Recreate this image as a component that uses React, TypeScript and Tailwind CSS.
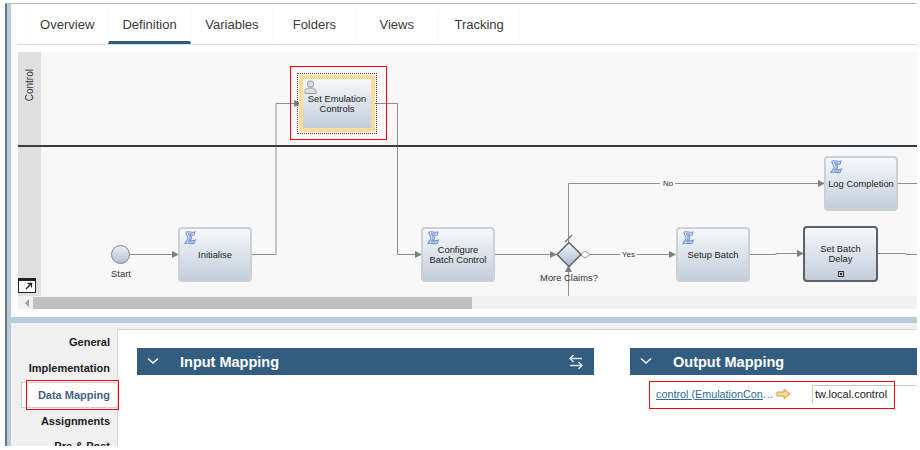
import React from "react";

function ServiceIcon() {
  return (
    <svg width="14" height="15" viewBox="0 0 14 15" fill="none" stroke="#7096d2" strokeWidth="1.1" className="absolute left-[3px] top-[1px]">
      <path d="M3 2C6 1 9 3 12 2L11 5C9 5.5 8 5 7 5C8 6.5 9.5 7 8.5 8.5C8 9.5 7.5 10 7 10.5C9 11 11 10.5 12.5 10L11 13.5C8 14 5 12.5 2 13.5C3 11 5.5 9.5 5 7.5C4.5 5.5 2.5 4.5 3 2Z" fill="#e6edf8" />
      <path d="M5 3.5C7 3.5 8 4 9.5 3.7M5.5 4C6.5 6 7.5 7 6.8 8.5C6.3 9.8 5.5 10.5 5 11.8C7 11.5 8.5 12.3 10.5 12" stroke="#5a80c0" strokeWidth="0.8" />
    </svg>
  );
}

function PersonIcon() {
  return (
    <svg width="13" height="14" viewBox="0 0 13 14" className="absolute left-[1px] top-[1px]" fill="#dedede" stroke="#9a9a9a" strokeWidth="1">
      <circle cx="6.5" cy="4" r="3.2" />
      <path d="M1 13.5V11.5C1 9.5 3 8.5 4.5 8H8.5C10 8.5 12 9.5 12 11.5V13.5Z" />
    </svg>
  );
}

function Node({ className, label, kind = "service" }: { className: string; label: string[]; kind?: "service" | "sub" }) {
  const isSub = kind === "sub";
  return (
    <div
      className={`absolute flex flex-col items-center justify-center rounded-[4px] bg-gradient-to-b from-[#f6f8fa] to-[#c3cedc] text-center text-[9.4px] leading-[10px] text-[#222] ${
        isSub ? "border-2 border-[#5c6166]" : "border-2 border-[#ccd1d6]"
      } ${className}`}
    >
      {!isSub && <ServiceIcon />}
      {label.map((l) => (
        <span key={l} className="whitespace-nowrap">{l}</span>
      ))}
      {isSub && (
        <span className="absolute bottom-[3px] left-1/2 flex h-[6px] w-[6px] -translate-x-1/2 items-center justify-center border border-[#333] bg-[#ccc]">
          <span className="h-[2px] w-[2px] bg-[#222]" />
        </span>
      )}
    </div>
  );
}

function Arrow({ x, y }: { x: number; y: number }) {
  return <path d={`M${x} ${y - 3.5}L${x + 7} ${y}L${x} ${y + 3.5}Z`} fill="#7f7f7f" stroke="none" />;
}

function Connectors() {
  return (
    <svg width="876" height="244" viewBox="41 52 876 244" className="absolute left-0 top-0" fill="none" stroke="#8e8e8e" strokeWidth="1">
      <path d="M130 254.5H172" />
      <Arrow x={172} y={254.5} />
      <path d="M252 254.5H276V103.5H294" />
      <Arrow x={294} y={103.5} />
      <path d="M374 103.5H397.5V254.5H415" />
      <Arrow x={415} y={254.5} />
      <path d="M495 254.5H550" />
      <Arrow x={550} y={254.5} />
      <path d="M590 254.5H620M637 254.5H670" />
      <Arrow x={669} y={254.5} />
      <path d="M580 254.5L585 251L590 254.5L585 258Z" fill="#fff" stroke="#999" />
      <path d="M750 254.5H776V253.5H797" />
      <Arrow x={797} y={253.5} />
      <path d="M878 253.5H906V254.5H917" />
      <path d="M568.5 242V183.5H660M675 183.5H818" />
      <Arrow x={818} y={183.5} />
      <path d="M898 183.5H917" />
      <path d="M565 242L572 235" stroke="#777" strokeWidth="1.5" />
      <path d="M568.5 268V296" />
      <path d="M565 272L568.5 265L572 272Z" fill="#7f7f7f" stroke="none" />
      <path d="M557 254.5L569 242.5L581 254.5L569 266.5Z" fill="url(#gw)" stroke="#5c636b" strokeWidth="1.5" />
      <circle cx="120.5" cy="254.5" r="9" fill="url(#st)" stroke="#7c8590" strokeWidth="1" />
      <defs>
        <linearGradient id="gw" x1="0" y1="0" x2="0" y2="1">
          <stop offset="0" stopColor="#f4f6fa" />
          <stop offset="1" stopColor="#a9bbd6" />
        </linearGradient>
        <linearGradient id="st" x1="0" y1="0" x2="0" y2="1">
          <stop offset="0" stopColor="#eef1f5" />
          <stop offset="1" stopColor="#b4c0d0" />
        </linearGradient>
      </defs>
    </svg>
  );
}

function Header({ title, className, swap }: { title: string; className: string; swap?: boolean }) {
  return (
    <div className={`flex h-[27px] items-center bg-[#325c80] text-white ${className}`}>
      <svg width="12" height="8" viewBox="0 0 12 8" fill="none" stroke="#fff" strokeWidth="1.5" className="ml-[10px] mt-[-2px]">
        <path d="M1 1.5L6 6L11 1.5" />
      </svg>
      <span className="ml-[21px] pt-[3px] text-[14.5px] font-bold">{title}</span>
      {swap && (
        <svg width="16" height="16" viewBox="0 0 16 16" fill="none" stroke="#dbe5ee" strokeWidth="1.4" className="ml-auto mr-[10px]">
          <path d="M14 4.5H2M5.5 1L2 4.5L5.5 8M2 11.5H14M10.5 8L14 11.5L10.5 15" />
        </svg>
      )}
    </div>
  );
}

export default function App() {
  const tabs = ["Overview", "Definition", "Variables", "Folders", "Views", "Tracking"];
  const nav = ["General", "Implementation", "Data Mapping", "Assignments", "Pre & Post"];
  return (
    <div className="h-[450px] w-[920px] overflow-hidden bg-white pl-[5px] pr-[3px] pt-[3px] font-['Liberation_Sans',Arial,sans-serif]">
      <div className="flex h-[443px] border-l-2 border-t border-l-[#6f757b] border-t-[#bdbdbd]">
        <div className="w-[4px] shrink-0 bg-[#b5cde0]" />
        <div className="flex min-w-0 flex-1 flex-col">
          <div className="h-[313px] shrink-0 bg-white">
            <div className="ml-[6px] flex h-[41px] border-b border-[#dcdcdc] pl-[9px]">
              {tabs.map((t) => (
                <div
                  key={t}
                  className={`flex h-[40px] w-[82.4px] items-center justify-center rounded-t-lg border-x border-b-[3px] border-t border-x-[#fbfbfb] border-t-[#fbfbfb] pt-[3px] text-[13px] text-[#3a3a3a] ${
                    t === "Definition" ? "border-b-[#2f5b80]" : "border-b-transparent"
                  }`}
                >
                  {t}
                </div>
              ))}
            </div>
            <div className="ml-[7px] mt-[7px]">
              <div className="relative flex h-[244px]">
                <div className="relative w-[23px] shrink-0 bg-[#e0e0e0]">
                  <div className="flex h-[49px] items-end justify-center">
                    <span className="rotate-180 text-[10px] leading-[12px] text-[#333] [writing-mode:vertical-rl]">Control</span>
                  </div>
                  <div className="absolute bottom-[3px] left-0 h-[15px] w-[18px] border-x border-b border-t-[3px] border-[#222] bg-white">
                    <svg width="16" height="10" viewBox="0 0 16 10" fill="none" stroke="#222" strokeWidth="1.3">
                      <path d="M7 8L12 3M8.5 2.5H12.5V6.5" />
                    </svg>
                  </div>
                </div>
                <div className="relative min-w-0 flex-1 overflow-hidden bg-[#f8f8f8]">
                  <Connectors />
                  <div className="absolute left-[256px] top-[21px] h-[61px] w-[80px] border border-dotted border-[#444] p-[1px]">
                    <div className="relative flex h-full flex-col items-center justify-center rounded-[2px] border-[4px] border-[#ffdc9c] bg-gradient-to-b from-[#f6f8fa] to-[#c3cedc] text-center text-[9.4px] leading-[10px] text-[#222]">
                      <PersonIcon />
                      <span className="whitespace-nowrap">Set Emulation</span>
                      <span>Controls</span>
                    </div>
                  </div>
                  <div className="absolute left-[249px] top-[14px] h-[74px] w-[97px] border border-[#f00]" />
                  <div className="absolute left-[60px] top-[217px] w-[40px] text-center text-[9.4px] leading-[10px] text-[#333]">Start</div>
                  <Node className="left-[137px] top-[175px] h-[55px] w-[74px]" label={["Initialise"]} />
                  <Node className="left-[380px] top-[175px] h-[55px] w-[74px]" label={["Configure", "Batch Control"]} />
                  <Node className="left-[635px] top-[175px] h-[55px] w-[74px]" label={["Setup Batch"]} />
                  <Node kind="sub" className="left-[762px] top-[174px] h-[56px] w-[75px]" label={["Set Batch", "Delay"]} />
                  <Node className="left-[783px] top-[104px] h-[55px] w-[74px]" label={["Log Completion"]} />
                  <div className="absolute left-[497px] top-[221px] w-[62px] whitespace-nowrap text-center text-[9.4px] leading-[10px] text-[#333]">More Claims?</div>
                  <div className="absolute left-[581px] top-[198px] text-[8px] leading-[10px] text-[#333]">Yes</div>
                  <div className="absolute left-[622px] top-[127px] text-[8px] leading-[10px] text-[#333]">No</div>
                </div>
                <div className="absolute left-0 right-0 top-[93px] h-[2px] bg-[#3d3d3d]" />
              </div>
              <div className="flex h-[13px] items-center bg-[#f1f1f1]">
                <div className="ml-[7px] h-0 w-0 border-y-[4px] border-r-[4px] border-y-transparent border-r-[#9a9a9a]" />
                <div className="ml-[4px] h-[12px] w-[439px] bg-[#c0c0c0]" />
              </div>
            </div>
          </div>
          <div className="h-[6px] shrink-0 bg-[#b5cde0]" />
          <div className="flex min-h-0 flex-1 overflow-hidden bg-[#f0f0f0]">
            <div className="w-[106px] shrink-0 pt-[6px]">
              {nav.map((n) => (
                <div
                  key={n}
                  className={`flex h-[26.4px] items-center justify-end pr-[7px] text-[11px] font-bold ${
                    n === "Data Mapping"
                      ? "ml-[10px] border-y border-l border-[#d0d0d0] bg-white text-[#3f6385]"
                      : n === "Pre & Post"
                        ? "mt-[-2px] text-[#222]"
                        : "text-[#222]"
                  }`}
                >
                  {n}
                </div>
              ))}
            </div>
            <div className="relative mt-[6px] min-w-0 flex-1 border-l border-t border-[#d5d5d5] bg-white pl-[19px] pt-[18px]">
              <div className="absolute left-[-92px] top-[50px] h-[30px] w-[93px] border border-[#f00]" />
              <div className="flex">
                <Header title="Input Mapping" className="w-[457px] shrink-0" swap />
                <div className="ml-[36px] w-[287px] shrink-0">
                  <Header title="Output Mapping" className="w-full" />
                  <div className="relative flex h-[28px] items-center pl-[26px] pt-[10px]">
                    <span className="w-[118px] shrink-0 truncate text-[10.8px] text-[#2e6b9a] underline">control (EmulationControls)</span>
                    <svg width="15" height="12" viewBox="0 0 15 12" className="ml-[2px] shrink-0" fill="#f5dc9a" stroke="#c9a040" strokeWidth="1">
                      <path d="M1 4H8V1L14 6L8 11V8H1Z" />
                    </svg>
                    <div className="ml-[21px] flex h-[18px] w-[105px] shrink-0 items-center border-l border-t border-[#c8c8c8] pl-[2px] text-[11px] text-[#222]">tw.local.control</div>
                    <div className="absolute left-[19px] top-[6px] h-[28px] w-[246px] border border-[#f00]" />
                  </div>
                </div>
              </div>
            </div>
          </div>
        </div>
      </div>
    </div>
  );
}
